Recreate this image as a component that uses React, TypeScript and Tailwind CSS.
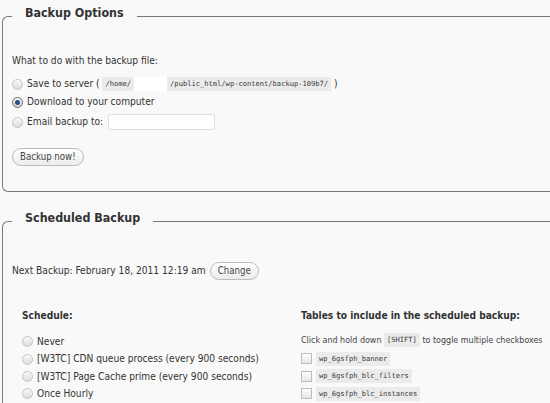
import React from 'react';

const sans = "font-['DejaVu_Sans_Condensed','DejaVu_Sans',sans-serif]";
const mono = "font-['DejaVu_Sans_Mono','Liberation_Mono',monospace]";

function Radio({ checked = false }: { checked?: boolean }) {
  return (
    <span
      className={
        'inline-flex h-[11px] w-[11px] shrink-0 items-center justify-center rounded-full border ' +
        (checked
          ? 'border-[#6a6a6a] bg-gradient-to-b from-[#f4f4f4] to-[#d6d6d6]'
          : 'border-[#c4c4c4] bg-gradient-to-b from-[#fafafa] to-[#dcdcdc]')
      }
    >
      {checked && <span className="h-[5px] w-[5px] rounded-full bg-[#1e4f8a]" />}
    </span>
  );
}

function Checkbox() {
  return (
    <span className="inline-block h-[11px] w-[11px] shrink-0 border border-[#bdbdbd] bg-gradient-to-b from-[#fdfdfd] to-[#e6e6e6]" />
  );
}

function Code({ children }: { children: React.ReactNode }) {
  return (
    <span className={`${mono} whitespace-nowrap bg-[#ebebeb] px-[3px] text-[7.1px] leading-[14px] text-[#3a3a3a]`}>
      {children}
    </span>
  );
}

function PillButton({ children }: { children: React.ReactNode }) {
  return (
    <button className="flex h-[18px] items-center rounded-full border border-[#bcbcbc] bg-gradient-to-b from-[#ffffff] to-[#ececec] px-[7px] text-[9.6px] text-[#464646]">
      {children}
    </button>
  );
}

export default function App() {
  const schedules = [
    'Never',
    '[W3TC] CDN queue process (every 900 seconds)',
    '[W3TC] Page Cache prime (every 900 seconds)',
    'Once Hourly',
  ];
  const tables = ['wp_6gsfph_banner', 'wp_6gsfph_blc_filters', 'wp_6gsfph_blc_instances'];

  return (
    <div className={`${sans} h-[403px] w-[550px] overflow-hidden bg-[#f9f9f9] text-[10.15px] text-[#333]`}>
      {/* Backup Options */}
      <fieldset className="ml-[2px] rounded-l-[6px] border border-r-0 border-[#7a7a7a] pb-[25px] pl-[9px]">
        <legend className="h-[32px] px-[13px] text-[12.4px] font-bold leading-[26px] text-[#333]">
          Backup Options
        </legend>
        <div className="mt-[21px] leading-[16px]">What to do with the backup file:</div>
        <div className="mt-[6px] flex h-[18px] items-center gap-[4px]">
          <Radio />
          <span className="flex items-center">
            Save to server (&nbsp;
            <Code>/home/</Code>
            <span className="inline-block h-[14px] w-[33px] bg-white" />
            <Code>/public_html/wp-content/backup-109b7/</Code>
            &nbsp;)
          </span>
        </div>
        <div className="flex h-[18px] items-center gap-[4px]">
          <Radio checked />
          <span>Download to your computer</span>
        </div>
        <div className="mt-[2px] flex h-[18px] items-center gap-[4px]">
          <Radio />
          <span>Email backup to:</span>
          <span className="ml-[1px] inline-block h-[16px] w-[107px] rounded-[2px] border border-[#dfdfdf] bg-white" />
        </div>
        <div className="mt-[17px] flex">
          <PillButton>Backup now!</PillButton>
        </div>
      </fieldset>

      {/* Scheduled Backup */}
      <fieldset className="ml-[2px] mt-[13px] rounded-l-[6px] border border-r-0 border-[#7a7a7a] pb-[20px] pl-[9px]">
        <legend className="h-[32px] px-[13px] text-[12.4px] font-bold leading-[26px] text-[#333]">
          Scheduled Backup
        </legend>
        <div className="mt-[25px] flex h-[18px] items-center gap-[4px]">
          <span>Next Backup: February 18, 2011 12:19 am</span>
          <PillButton>Change</PillButton>
        </div>

        <div className="mt-[28px] flex">
          <div className="w-[289px] shrink-0 pl-[10px]">
            <div className="font-bold leading-[16px]">Schedule:</div>
            <div className="mt-[9px] flex flex-col">
              {schedules.map((s) => (
                <div key={s} className="flex h-[17.4px] items-center gap-[4px]">
                  <Radio />
                  <span>{s}</span>
                </div>
              ))}
            </div>
          </div>
          <div className="flex-1">
            <div className="whitespace-nowrap font-bold leading-[16px]">Tables to include in the scheduled backup:</div>
            <div className="mt-[8px] flex items-center whitespace-nowrap text-[8.9px] leading-[16px] text-[#444]">
              Click and hold down&nbsp;
              <Code>[SHIFT]</Code>
              &nbsp;to toggle multiple checkboxes
            </div>
            <div className="mt-[2px] flex flex-col">
              {tables.map((t) => (
                <div key={t} className="flex h-[17.5px] items-center gap-[4px]">
                  <Checkbox />
                  <Code>{t}</Code>
                </div>
              ))}
            </div>
          </div>
        </div>
      </fieldset>
    </div>
  );
}
